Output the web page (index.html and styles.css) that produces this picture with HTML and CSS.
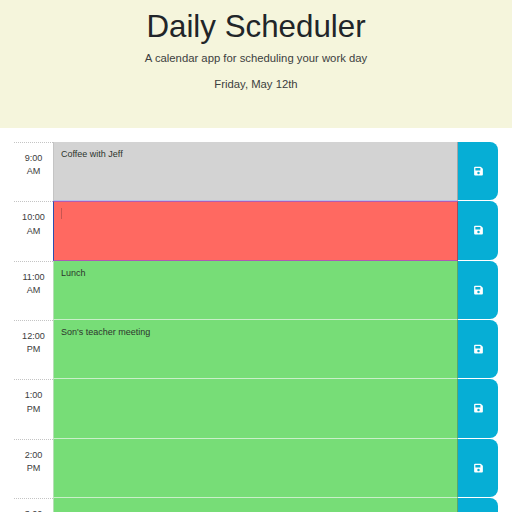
FILE: index.html
```
<!DOCTYPE html>
<html lang="en">
<head>
<meta charset="utf-8">
<title>Daily Scheduler</title>
<link rel="stylesheet" href="styles.css">
</head>
<body>
<svg class="defs" width="0" height="0"><symbol id="save" viewBox="0 0 448 512"><path fill="currentColor" d="M434 130 350 46a48 48 0 0 0-34-14H48A48 48 0 0 0 0 80v352a48 48 0 0 0 48 48h352a48 48 0 0 0 48-48V164a48 48 0 0 0-14-34zM224 416a64 64 0 1 1 0-128 64 64 0 0 1 0 128zm96-305v105a12 12 0 0 1-12 12H76a12 12 0 0 1-12-12V108a12 12 0 0 1 12-12h229a12 12 0 0 1 8 4l4 3a12 12 0 0 1 3 8z"/></symbol></svg>
<header class="jumbotron">
  <h1>Daily Scheduler</h1>
  <p class="lead">A calendar app for scheduling your work day</p>
  <p class="date">Friday, May 12th</p>
</header>
<main class="container">
  <div class="row"><div class="hour">9:00<br>AM</div><div class="entry past"><span>Coffee with Jeff</span></div><button class="save"><svg><use href="#save"/></svg></button></div>
  <div class="row"><div class="hour">10:00<br>AM</div><div class="entry present"><i class="caret"></i></div><button class="save"><svg><use href="#save"/></svg></button></div>
  <div class="row"><div class="hour">11:00<br>AM</div><div class="entry future"><span>Lunch</span></div><button class="save"><svg><use href="#save"/></svg></button></div>
  <div class="row"><div class="hour">12:00<br>PM</div><div class="entry future"><span>Son's teacher meeting</span></div><button class="save"><svg><use href="#save"/></svg></button></div>
  <div class="row"><div class="hour">1:00<br>PM</div><div class="entry future"></div><button class="save"><svg><use href="#save"/></svg></button></div>
  <div class="row"><div class="hour">2:00<br>PM</div><div class="entry future"></div><button class="save"><svg><use href="#save"/></svg></button></div>
  <div class="row"><div class="hour">3:00</div><div class="entry future"></div><button class="save"><svg><use href="#save"/></svg></button></div>
</main>
</body>
</html>
```
FILE: styles.css
```
* { box-sizing: border-box; }
body {
  margin: 0;
  height: 512px;
  overflow: hidden;
  background: #fff;
  color: #212529;
  font-family: "Liberation Sans", Arial, sans-serif;
}
.defs { display: block; }
.jumbotron {
  height: 128px;
  padding-top: 8px;
  background: #f5f5dc;
  text-align: center;
}
h1 {
  margin: 0;
  font-size: 31.3px;
  font-weight: 400;
  line-height: 38px;
}
p { margin: 0; color: #3c4040; }
.lead { padding-top: 4px; font-size: 11.3px; line-height: 16px; }
.date { padding-top: 10px; font-size: 11.3px; line-height: 16px; }
.container { padding: 14px 14px 0; }
.row {
  display: grid;
  grid-template-columns: 39px 405px 40px;
  height: 59.34px;
}
.hour {
  padding-top: 9px;
  border-top: 1px dotted #c4c4c4;
  color: #3c3c3c;
  font-size: 9.1px;
  line-height: 13.4px;
  text-align: center;
}
.entry {
  padding: 6px 7px 0;
  border: solid;
  border-width: 0 1px 1px;
  color: #2d352d;
  font-size: 9px;
  line-height: 13px;
}
.past { background: #d3d3d3; border-color: #c4c4c4 #a5a5a5 #b5c0e8 #c4c4c4; }
.present {
  background: #ff6961;
  border-width: 1px;
  border-color: #b45cb0 #a54b58 #ae58b4 #2c4eae;
}
.future { background: #77dd77; border-color: #c9efc9 #5ba66a #c9efc9 #b5dfb5; }
.caret {
  display: block;
  width: 1px;
  height: 11px;
  background: #c85550;
}
.save {
  display: flex;
  align-items: center;
  justify-content: center;
  height: calc(100% - 1px);
  margin: 0;
  padding: 0;
  border: 0;
  border-radius: 0 8px 8px 0;
  background: #06aed5;
  color: #fff;
}
.save svg { width: 9px; height: 10px; }
```
